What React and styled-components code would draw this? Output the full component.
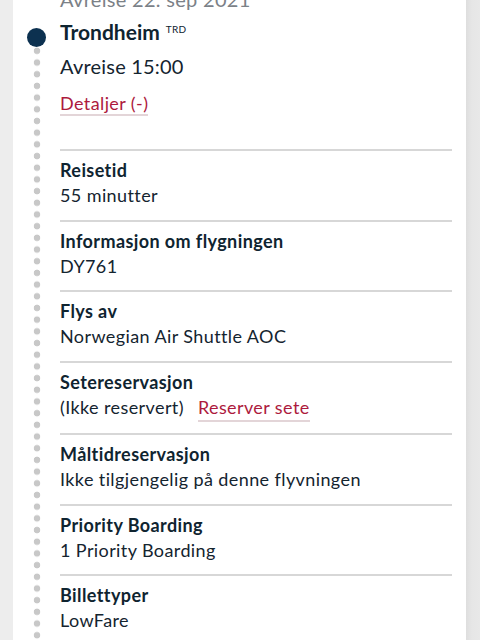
import React from 'react';
import styled, { createGlobalStyle } from 'styled-components';

const GlobalStyle = createGlobalStyle`
  html, body {
    margin: 0;
    padding: 0;
    background: #ededed;
    overflow: hidden;
  }
  body {
    font-family: Lato, "Noto Sans", "Liberation Sans", sans-serif;
    color: #14242f;
  }
`;

const Page = styled.div`
  display: flex;
  min-height: 100vh;
  padding-left: 13px;
  background: linear-gradient(to right, #ededed 0, #ededed 466px, #dedede 466px, #e6e6e6 472px, #e8e8e8 100%);
`;

const Card = styled.div`
  width: 453px;
  background: #fff;
  display: grid;
  grid-template-columns: 47px 1fr;
  padding-right: 14px;
  box-sizing: border-box;
`;

const Rail = styled.div`
  display: flex;
  flex-direction: column;
  align-items: center;
  padding-top: 28px;
`;

const BigDot = styled.div`
  width: 19px;
  height: 19px;
  border-radius: 50%;
  background: #0c3150;
  flex: none;
`;

const Dots = styled.div`
  flex: 1;
  width: 8px;
  margin-top: -2px;
  background-image: radial-gradient(circle at center, #c8c8c8 3px, transparent 3.6px);
  background-size: 8px 11.7px;
  background-repeat: repeat-y;
`;

const Content = styled.div`
  display: flex;
  flex-direction: column;
  margin-top: -14px;
`;

const DateLine = styled.div`
  font-size: 20px;
  line-height: 26px;
  color: #7b8187;
  letter-spacing: 0.3px;
`;

const City = styled.div`
  margin-top: 6px;
  font-size: 21px;
  line-height: 28px;
  font-weight: 700;
  color: #0f2430;
  display: flex;
  align-items: flex-start;
  gap: 6px;
`;

const Code = styled.span`
  font-size: 10px;
  line-height: 10px;
  font-weight: 400;
  margin-top: 6px;
  letter-spacing: 0.3px;
`;

const Departure = styled.div`
  margin-top: 7px;
  font-size: 20px;
  line-height: 26px;
  letter-spacing: 0.2px;
`;

const LinkText = styled.a`
  color: #ad1a3d;
  text-decoration: none;
  border-bottom: 2px solid #e3d5d8;
  cursor: pointer;
`;

const DetailsRow = styled.div`
  margin-top: 12px;
  font-size: 18px;
  line-height: 25px;
  margin-bottom: 33px;
  letter-spacing: 0.4px;
`;

const Section = styled.div`
  border-top: 2px solid #d7d7d7;
  padding: 7px 0 11.5px;
  font-size: 18px;
  line-height: 25px;
  letter-spacing: 0.4px;
`;

const Label = styled.div`
  font-weight: 700;
  color: #0f2430;
`;

const Value = styled.div`
  display: flex;
  gap: 14px;
`;

const sections = [
  { label: 'Reisetid', value: '55 minutter' },
  { label: 'Informasjon om flygningen', value: 'DY761' },
  { label: 'Flys av', value: 'Norwegian Air Shuttle AOC' },
  { label: 'Setereservasjon', value: '(Ikke reservert)', link: 'Reserver sete' },
  { label: 'Måltidreservasjon', value: 'Ikke tilgjengelig på denne flyvningen' },
  { label: 'Priority Boarding', value: '1 Priority Boarding' },
  { label: 'Billettyper', value: 'LowFare' },
];

export default function App() {
  return (
    <>
      <GlobalStyle />
      <Page>
        <Card>
          <Rail>
            <BigDot />
            <Dots />
          </Rail>
          <Content>
            <DateLine>Avreise 22. sep 2021</DateLine>
            <City>
              Trondheim <Code>TRD</Code>
            </City>
            <Departure>Avreise 15:00</Departure>
            <DetailsRow>
              <LinkText>Detaljer (-)</LinkText>
            </DetailsRow>
            {sections.map((s) => (
              <Section key={s.label}>
                <Label>{s.label}</Label>
                <Value>
                  <span>{s.value}</span>
                  {s.link && <LinkText>{s.link}</LinkText>}
                </Value>
              </Section>
            ))}
          </Content>
        </Card>
      </Page>
    </>
  );
}
